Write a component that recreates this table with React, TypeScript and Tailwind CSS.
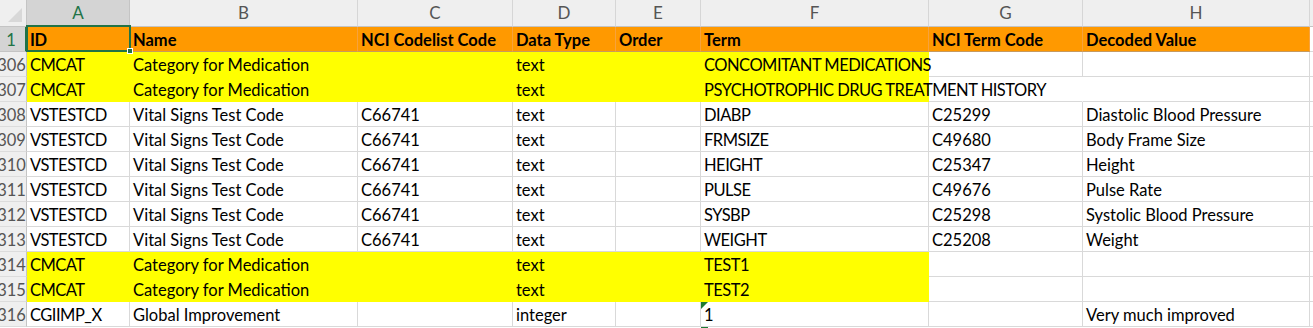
import React from 'react'

type Fill = 'orange' | 'yellow' | undefined

type Row = {
  num: string
  cells: string[]
  fill?: 'orange' | 'yellow'
  yellowTo?: number
}

const COLS = ['A', 'B', 'C', 'D', 'E', 'F', 'G', 'H', '']

const ROWS: Row[] = [
  { num: '1', cells: ['ID', 'Name', 'NCI Codelist Code', 'Data Type', 'Order', 'Term', 'NCI Term Code', 'Decoded Value', ''], fill: 'orange' },
  { num: '306', cells: ['CMCAT', 'Category for Medication', '', 'text', '', 'CONCOMITANT MEDICATIONS', '', '', ''], fill: 'yellow', yellowTo: 6 },
  { num: '307', cells: ['CMCAT', 'Category for Medication', '', 'text', '', 'PSYCHOTROPHIC DRUG TREATMENT HISTORY', '', '', ''], fill: 'yellow', yellowTo: 6 },
  { num: '308', cells: ['VSTESTCD', 'Vital Signs Test Code', 'C66741', 'text', '', 'DIABP', 'C25299', 'Diastolic Blood Pressure', ''] },
  { num: '309', cells: ['VSTESTCD', 'Vital Signs Test Code', 'C66741', 'text', '', 'FRMSIZE', 'C49680', 'Body Frame Size', ''] },
  { num: '310', cells: ['VSTESTCD', 'Vital Signs Test Code', 'C66741', 'text', '', 'HEIGHT', 'C25347', 'Height', ''] },
  { num: '311', cells: ['VSTESTCD', 'Vital Signs Test Code', 'C66741', 'text', '', 'PULSE', 'C49676', 'Pulse Rate', ''] },
  { num: '312', cells: ['VSTESTCD', 'Vital Signs Test Code', 'C66741', 'text', '', 'SYSBP', 'C25298', 'Systolic Blood Pressure', ''] },
  { num: '313', cells: ['VSTESTCD', 'Vital Signs Test Code', 'C66741', 'text', '', 'WEIGHT', 'C25208', 'Weight', ''] },
  { num: '314', cells: ['CMCAT', 'Category for Medication', '', 'text', '', 'TEST1', '', '', ''], fill: 'yellow', yellowTo: 6 },
  { num: '315', cells: ['CMCAT', 'Category for Medication', '', 'text', '', 'TEST2', '', '', ''], fill: 'yellow', yellowTo: 6 },
  { num: '316', cells: ['CGIIMP_X', 'Global Improvement', '', 'integer', '', '1', '', 'Very much improved', ''] },
]

// all-caps values look too wide in Lato next to the original font
const isCaps = (t: string) => /^[A-Z][A-Z _0-9]+$/.test(t) && !/^C\d+$/.test(t)

function Cell({ text, fill, bold, noRight }: { text: string; fill: Fill; bold?: boolean; noRight?: boolean }) {
  const tone =
    fill === 'orange'
      ? 'bg-[#ff9900] border-r-[#f7a23c] border-b-[#c79a5e]'
      : fill === 'yellow'
        ? 'bg-[#ffff00] border-r-[#ffff00] border-b-[#ffff00]'
        : 'border-b-[#d9d9d9] ' + (noRight ? 'border-r-transparent' : 'border-r-[#d9d9d9]')
  return (
    <div
      className={`flex items-center border-r border-b pl-[3px] pt-[3px] whitespace-nowrap text-[16.5px] text-black ${tone} ${
        bold ? 'font-bold' : ''
      } ${isCaps(text) ? 'tracking-[-0.5px]' : ''}`}
    >
      {text}
    </div>
  )
}

export default function App() {
  return (
    <div className="relative w-[1313px] h-[328px] overflow-hidden bg-white font-['Lato','Liberation_Sans',sans-serif]">
      <div className="grid grid-cols-[27px_103px_228px_155px_103px_85px_228px_154px_227px_1fr] grid-rows-[27px_repeat(12,25px)]">
        {/* corner */}
        <div className="relative bg-[#efefef] border-r border-b border-[#c4c4c4]">
          <div className="absolute right-[4px] bottom-[4px] w-0 h-0 border-l-[14px] border-l-transparent border-b-[14px] border-b-[#d8d8d8]" />
        </div>
        {COLS.map((c, i) => (
          <div
            key={i}
            className={`flex items-center justify-center text-[17px] border-r ${
              i === 0
                ? 'bg-[#d4d4d4] text-[#217346] border-r-[#c4c4c4] border-b-2 border-b-[#217346]'
                : 'bg-[#efefef] text-[#555] border-r-[#d6d6d6] border-b border-b-[#c4c4c4]'
            }`}
          >
            {c}
          </div>
        ))}

        {ROWS.map((r, ri) => (
          <React.Fragment key={r.num}>
            <div
              className={`flex items-center justify-center overflow-hidden pt-[3px] pr-[3px] text-[16.5px] border-b ${
                ri === 0
                  ? 'bg-[#d4d4d4] text-[#217346] border-r-2 border-r-[#217346] border-b-[#c4c4c4]'
                  : 'bg-[#efefef] text-[#555] border-r border-r-[#c4c4c4] border-b-[#dcdcdc]'
              }`}
            >
              {r.num}
            </div>
            {r.cells.map((t, ci) => {
              let fill: Fill = undefined
              if (r.fill === 'orange' && ci < 8) fill = 'orange'
              if (r.fill === 'yellow' && ci < (r.yellowTo ?? 0)) fill = 'yellow'
              const noRight = r.num === '307' && ci === 6
              return <Cell key={ci} text={t} fill={fill} bold={r.fill === 'orange'} noRight={noRight} />
            })}
          </React.Fragment>
        ))}
      </div>

      {/* active cell A1 */}
      <div className="absolute left-[26px] top-[25px] w-[105px] h-[27px] border-2 border-[#217346]" />
      <div className="absolute left-[127px] top-[48px] w-[6px] h-[6px] bg-[#217346] border border-white" />

      {/* number-as-text markers in column F */}
      <div className="absolute left-[701px] top-[302px] w-0 h-0 border-t-[7px] border-t-[#1f7a34] border-r-[7px] border-r-transparent" />
      <div className="absolute left-[701px] top-[327px] w-[7px] h-[2px] bg-[#1f7a34]" />
    </div>
  )
}
